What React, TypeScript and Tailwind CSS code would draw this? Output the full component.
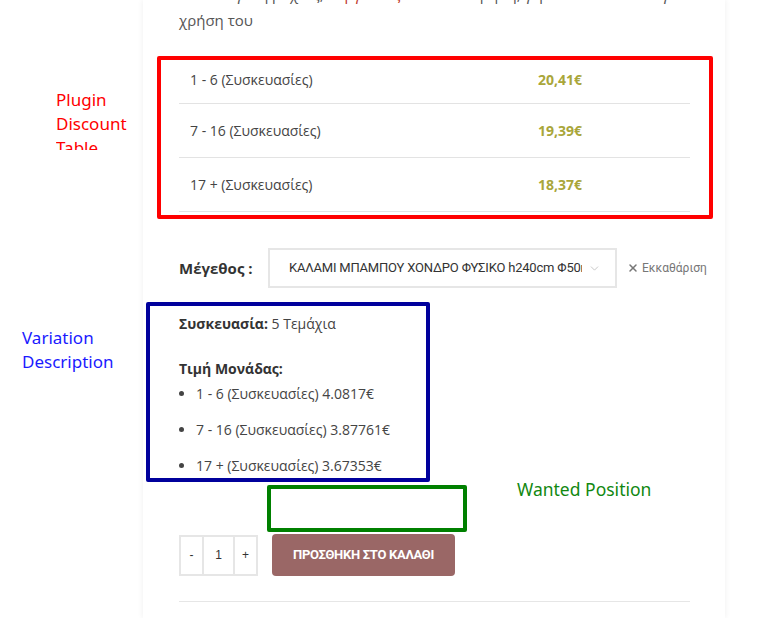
import { ChevronDown, X } from "lucide-react"

const tiers = [
  { range: "1 - 6 (Συσκευασίες)", price: "20,41€", unit: "4.0817€" },
  { range: "7 - 16 (Συσκευασίες)", price: "19,39€", unit: "3.87761€" },
  { range: "17 + (Συσκευασίες)", price: "18,37€", unit: "3.67353€" },
]

export default function App() {
  return (
    <div className="relative h-[618px] overflow-hidden bg-white font-['Open_Sans',sans-serif] text-[#444]">
      {/* product panel */}
      <div className="ml-[143px] flow-root h-full w-[582px] bg-white pl-[36px] pr-[35px] shadow-[0_0_6px_rgba(0,0,0,0.07)]">
        {/* description text, first line scrolled out */}
        <div className="mt-[-19px] text-[15px] leading-[26px] text-[#555]">
          <p className="overflow-hidden whitespace-nowrap">
            Ιδανικό για φράχτες, <span className="text-[#c0392b]">πέργκολες</span> και διακόσμηση, γερό και
            ανθεκτικό για <span className="text-[#c0392b]">κάθε</span> εξωτερική
          </p>
          <p>χρήση του</p>
        </div>

        {/* plugin discount table */}
        <div className="mt-[23px] ml-[-22px] mr-[-23px] rounded-[2px] border-4 border-[#ff0000] pl-[18px] pr-[19px] pb-[3px]">
          {tiers.map((t, i) => (
            <div
              key={t.range}
              className={
                i === 0
                  ? "grid h-[44px] grid-cols-[359px_1fr] items-center border-b border-[#e3e3e3] pb-[4px] text-[14px]"
                  : "grid h-[54px] grid-cols-[359px_1fr] items-center border-b border-[#e3e3e3] text-[14px]"
              }
            >
              <span className="pl-[11px]">{t.range}</span>
              <span className="font-bold text-[#a9a63a]">{t.price}</span>
            </div>
          ))}
        </div>

        {/* variation select */}
        <div className="mt-[29px] flex h-[40px] items-center">
          <span className="w-[89px] shrink-0 text-[15px] font-bold text-[#333]">Μέγεθος :</span>
          <div className="flex h-[40px] w-[349px] shrink-0 items-center border-2 border-[#e6e6e6] pl-[19px] pr-[14px]">
            <span className="flex-1 overflow-hidden whitespace-nowrap font-['Roboto',sans-serif] text-[13px] tracking-[-0.2px] text-[#333]">
              ΚΑΛΑΜΙ ΜΠΑΜΠΟΥ ΧΟΝΔΡΟ ΦΥΣΙΚΟ h240cm Φ50mm
            </span>
            <ChevronDown className="ml-[6px] h-[13px] w-[13px] text-[#bbb]" strokeWidth={1.5} />
          </div>
          <span className="ml-[10px] flex shrink-0 items-center whitespace-nowrap font-['Roboto',sans-serif] text-[12px] text-[#777]">
            <X className="mr-[3px] h-[12px] w-[12px]" strokeWidth={3} />
            Εκκαθάριση
          </span>
        </div>

        {/* variation description */}
        <div className="mt-[14px] ml-[-33px] w-[284px] rounded-[2px] border-4 border-[#00009c] pl-[29px] pt-[6px] text-[14px] leading-[24px]">
          <p>
            <span className="font-bold text-[#333]">Συσκευασία:</span> 5 Τεμάχια
          </p>
          <p className="mt-[21px] font-bold text-[#333]">Τιμή Μονάδας:</p>
          <ul className="mt-px list-disc space-y-[12px] pl-[17px]">
            {tiers.map((t) => (
              <li key={t.range}>
                {t.range} {t.unit}
              </li>
            ))}
          </ul>
        </div>

        {/* wanted position marker */}
        <div className="mt-[3px] flex items-start">
          <div className="ml-[88px] h-[47px] w-[200px] shrink-0 rounded-[2px] border-4 border-[#008000]" />
          <span className="ml-[50px] mt-[-8px] whitespace-nowrap font-['Noto_Sans',sans-serif] text-[17.5px] leading-[24px] text-[#118811]">
            Wanted Position
          </span>
        </div>

        {/* add to cart */}
        <div className="mt-[2px] flex items-center">
          <div className="flex h-[41px] border-2 border-[#e6e6e6] font-['Liberation_Sans',sans-serif] text-[12px] text-[#333]">
            <span className="flex w-[21px] items-center justify-center">-</span>
            <span className="flex w-[33px] items-center justify-center border-x-2 border-[#e6e6e6]">1</span>
            <span className="flex w-[21px] items-center justify-center">+</span>
          </div>
          <button className="ml-[14px] h-[42px] w-[183px] rounded-[4px] bg-[#9a6766] font-['Roboto',sans-serif] text-[13px] font-bold tracking-[-0.3px] text-white">
            ΠΡΟΣΘΗΚΗ ΣΤΟ ΚΑΛΑΘΙ
          </button>
        </div>

        <div className="mt-[25px] border-t border-[#e6e6e6]" />
      </div>

      {/* annotations */}
      <div className="absolute left-[56px] top-[88px] h-[62px] overflow-hidden font-['Noto_Sans',sans-serif] text-[17px] leading-[24px] text-[#ff0000]">
        Plugin
        <br />
        Discount
        <br />
        Table
      </div>
      <div className="absolute left-[22px] top-[326px] font-['Noto_Sans',sans-serif] text-[17px] leading-[24px] text-[#1a1aff]">
        Variation
        <br />
        Description
      </div>
    </div>
  )
}
